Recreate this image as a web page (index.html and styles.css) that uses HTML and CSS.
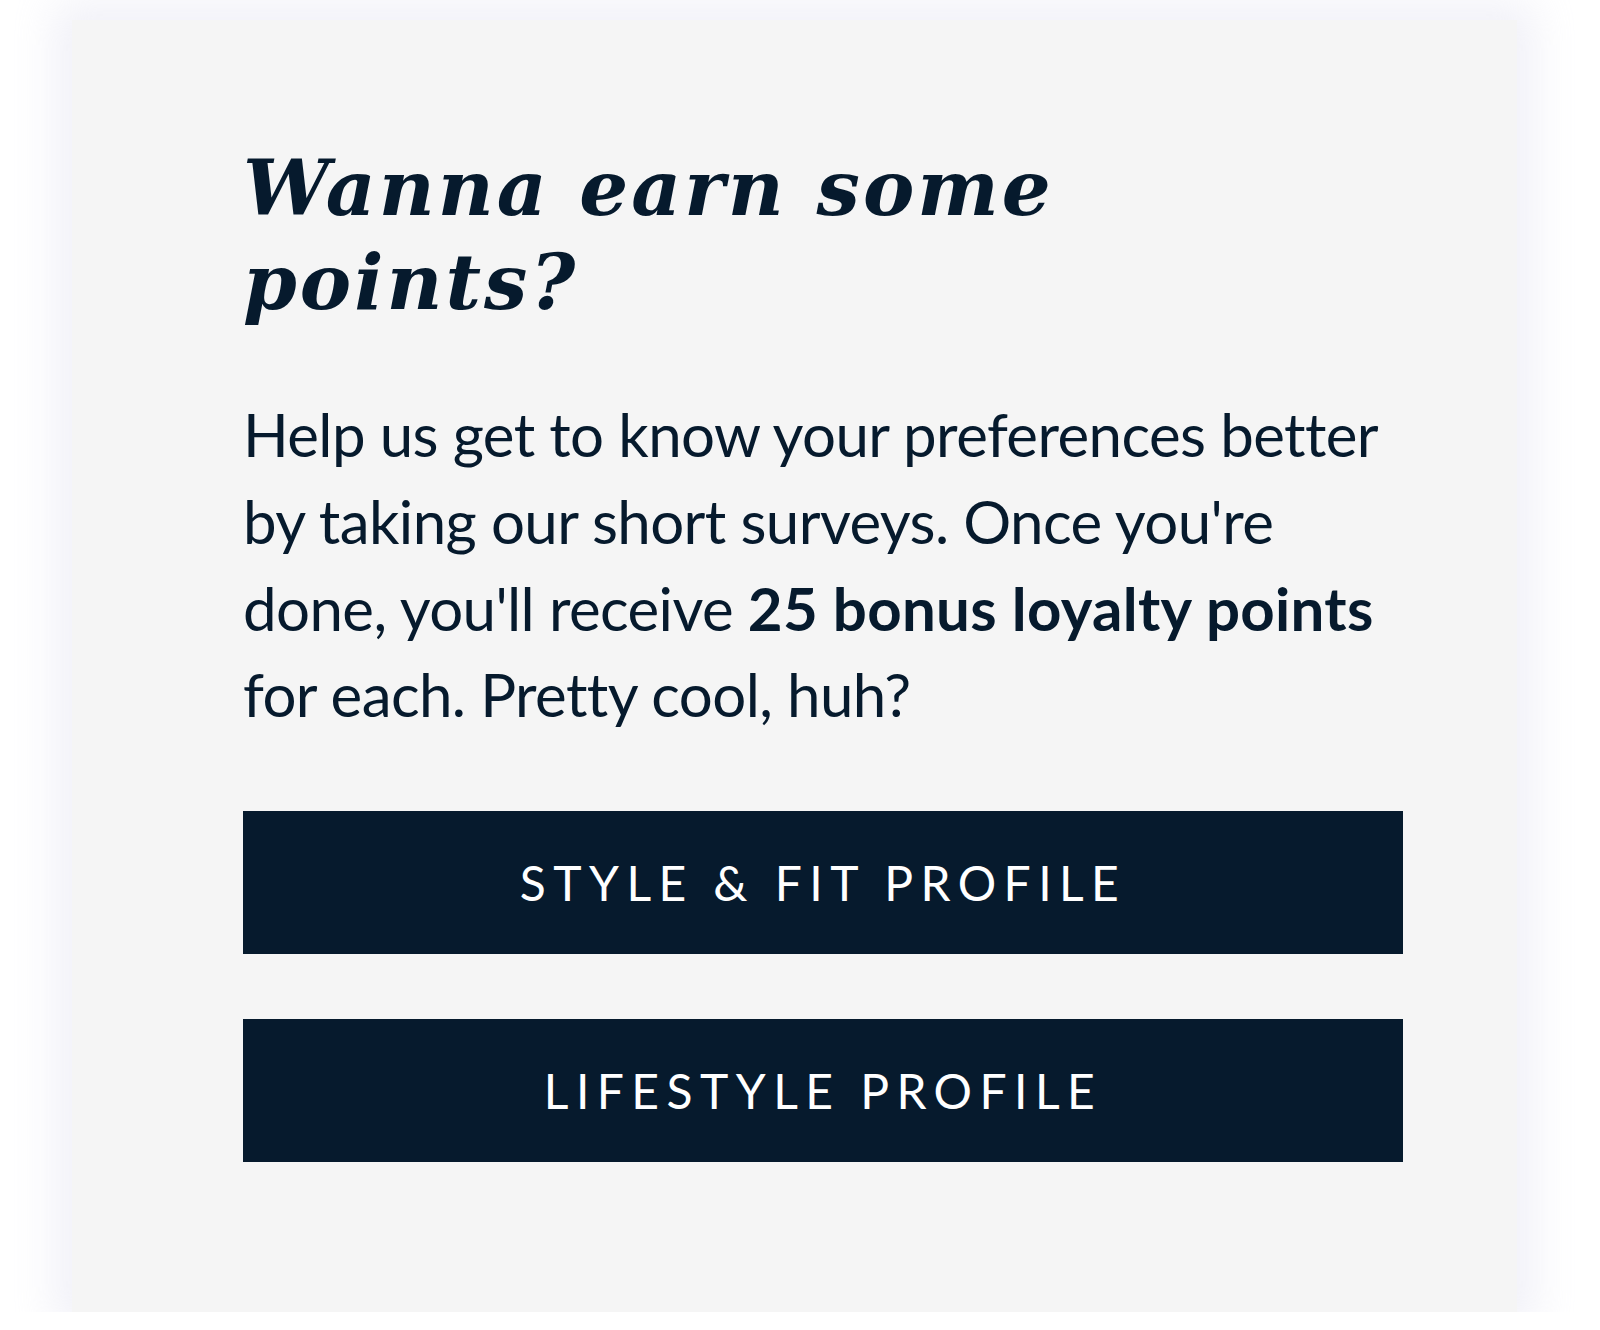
FILE: index.html
```html
<!DOCTYPE html>
<html lang="en">
<head>
<meta charset="utf-8">
<title>Wanna earn some points?</title>
<link rel="stylesheet" href="styles.css">
</head>
<body>
<section class="card">
  <div class="content">
    <h2 class="title">Wanna earn some<br>points?</h2>
    <p class="lead">Help us get to know your preferences better<br>by taking our short surveys. Once you're<br>done, you'll receive <strong>25 bonus loyalty points</strong><br>for each. Pretty cool, huh?</p>
    <div class="actions">
      <a class="btn" href="#">STYLE &amp; FIT PROFILE</a>
      <a class="btn" href="#">LIFESTYLE PROFILE</a>
    </div>
  </div>
</section>
</body>
</html>
```

FILE: styles.css
```css
html, body {
  margin: 0;
  padding: 0;
  background: #ffffff;
}
body {
  padding: 20px 0 0 72px;
  font-family: "Lato", "Noto Sans", sans-serif;
  color: #061a2d;
}
.card {
  width: 1445px;
  height: 1292px;
  box-sizing: border-box;
  background: #f5f5f5;
  box-shadow: 0 0 40px 18px rgba(236, 236, 245, 0.75);
  padding: 121px 0 0 171px;
}
.content {
  width: 1160px;
}
.title {
  margin: 0;
  font-family: "DejaVu Serif", serif;
  font-style: italic;
  font-weight: 700;
  font-size: 77px;
  line-height: 94px;
  letter-spacing: 3px;
  color: #061a2d;
}
.lead {
  margin: 62px 0 0;
  font-size: 60px;
  line-height: 86.8px;
  font-weight: 400;
  letter-spacing: -0.6px;
  white-space: nowrap;
  font-variant-ligatures: none;
}
.lead strong {
  font-weight: 700;
  letter-spacing: 0.3px;
}
.actions {
  margin-top: 73px;
  display: flex;
  flex-direction: column;
  gap: 65px;
}
.btn {
  display: flex;
  align-items: center;
  justify-content: center;
  height: 143px;
  background: #061a2d;
  color: #ffffff;
  text-decoration: none;
  font-size: 48px;
  font-weight: 400;
  letter-spacing: 0.155em;
  font-variant-ligatures: none;
}
```
